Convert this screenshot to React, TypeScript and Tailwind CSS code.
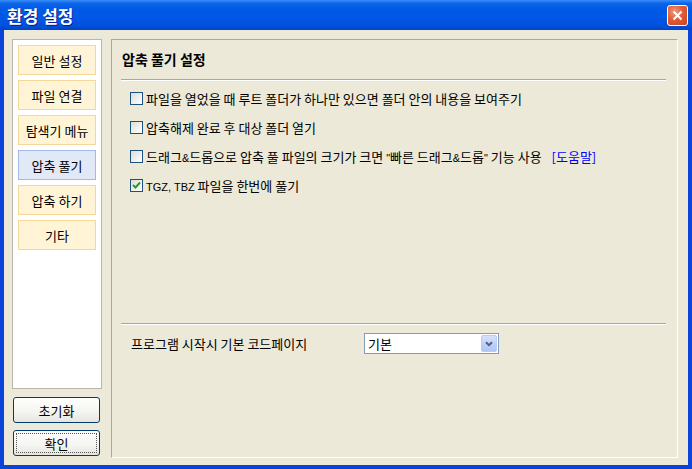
import { useState } from "react";

const menuItems = ["일반 설정", "파일 연결", "탐색기 메뉴", "압축 풀기", "압축 하기", "기타"];

function CheckBox({ checked }: { checked: boolean }) {
  return (
    <span className="w-[13px] h-[13px] shrink-0 border border-[#1C5180] bg-[linear-gradient(135deg,#DCDCD7_0%,#F2F2EE_60%,#FFFFFF_100%)] flex items-center justify-center">
      {checked && (
        <svg width="9" height="9" viewBox="0 0 9 9">
          <path d="M1 4 L3.5 6.5 L8 1.5" fill="none" stroke="#21A121" strokeWidth="2" />
        </svg>
      )}
    </span>
  );
}

function XpButton({ label, focused }: { label: string; focused?: boolean }) {
  return (
    <button className="w-[87px] h-[26px] ml-[1px] rounded-[3px] border border-[#003C74] bg-[linear-gradient(180deg,#FFFFFF_0%,#F4F4F0_60%,#E6E5DE_100%)] p-[2px] text-[13px] leading-none">
      <span
        className={`w-full h-full flex items-center justify-center ${
          focused ? "outline outline-1 outline-dotted outline-[#555] -outline-offset-1" : ""
        }`}
      >
        {label}
      </span>
    </button>
  );
}

export default function App() {
  const [selected, setSelected] = useState(3);
  const [checks, setChecks] = useState([false, false, false, true]);

  const toggle = (i: number) => setChecks(checks.map((c, j) => (j === i ? !c : c)));

  // latin bits are set smaller, like Tahoma 8pt next to Gulim
  const lat = "font-['Liberation_Sans'] text-[11px]";

  const lines = [
    <>파일을 열었을 때 루트 폴더가 하나만 있으면 폴더 안의 내용을 보여주기</>,
    <>압축해제 완료 후 대상 폴더 열기</>,
    <>
      드래그<span className={lat}>&amp;</span>드롭으로 압축 풀 파일의 크기가 크면{" "}
      <span className={lat}>&quot;</span>빠른 드래그
      <span className={lat}>&amp;</span>드롭<span className={lat}>&quot;</span> 기능 사용
    </>,
    <>
      <span className={lat}>TGZ, TBZ</span> 파일을 한번에 풀기
    </>,
  ];

  return (
    <div className="w-[692px] h-[469px] flex flex-col overflow-hidden font-['Noto_Sans_CJK_KR',sans-serif] text-[13px] text-black">
      {/* title bar */}
      <div className="h-[30px] shrink-0 flex items-center justify-between pl-[7px] pr-[4px] bg-[linear-gradient(180deg,#3A8CF8_0%,#0A63E6_12%,#0058E6_35%,#0057E5_65%,#0050DC_85%,#0044C6_100%)]">
        <span className="text-white font-bold text-[17px] leading-none [text-shadow:1px_1px_0_#0A1E8C]">
          환경 설정
        </span>
        <button className="w-[21px] h-[21px] rounded-[3px] border border-white bg-[radial-gradient(circle_at_35%_30%,#F09A7E_0%,#E35C38_45%,#C8401C_100%)] flex items-center justify-center">
          <svg width="11" height="11" viewBox="0 0 11 11">
            <path d="M1.5 1.5 L9.5 9.5 M9.5 1.5 L1.5 9.5" stroke="white" strokeWidth="2" />
          </svg>
        </button>
      </div>

      {/* body */}
      <div className="flex-1 flex bg-[#ECE9D8] border-x-4 border-b-4 border-[#0B44DA] pl-[8px] pt-[9px]">
        {/* left column */}
        <div className="w-[90px] flex flex-col">
          <div className="h-[350px] border border-[#B9B6AA] bg-white p-[5px] flex flex-col gap-[5px]">
            {menuItems.map((item, i) => (
              <div
                key={item}
                onClick={() => setSelected(i)}
                className={`h-[30px] flex items-center justify-center border leading-none ${
                  selected === i
                    ? "bg-[#E1E8F6] border-[#A3BAE6]"
                    : "bg-[#FFF5D6] border-[#F5D79A]"
                }`}
              >
                {item}
              </div>
            ))}
          </div>
          <div className="mt-[8px]">
            <XpButton label="초기화" />
          </div>
          <div className="mt-[7px]">
            <XpButton label="확인" focused />
          </div>
        </div>

        {/* right panel */}
        <div className="ml-[9px] w-[567px] h-[419px] border-l border-t border-[#ACA899] border-r-white border-b-white border-r border-b flex flex-col pl-[9px] pr-[11px]">
          <div className="pt-[9px] pl-[1px] h-[29px] leading-[20px] font-bold text-[14px]">압축 풀기 설정</div>
          <div className="mt-[10px] border-t border-[#ACA899] border-b border-b-white" />

          <div className="mt-[3px] pl-[9px] flex flex-col">
            {lines.map((text, i) => (
              <label key={i} onClick={() => toggle(i)} className="h-[29px] flex items-center cursor-default">
                <CheckBox checked={checks[i]} />
                <span className="ml-[3px] leading-none whitespace-nowrap">{text}</span>
                {i === 2 && <span className="ml-[10px] leading-none text-[#0000FF]">[도움말]</span>}
              </label>
            ))}
          </div>

          <div className="mt-[123px] border-t border-[#ACA899] border-b border-b-white" />

          <div className="mt-[8px] h-[21px] flex items-center pl-[10px]">
            <span className="w-[233px] leading-none">프로그램 시작시 기본 코드페이지</span>
            <div className="w-[135px] h-[21px] border border-[#7F9DB9] bg-white flex items-center justify-between pl-[3px] pr-[1px]">
              <span className="leading-none">기본</span>
              <span className="w-[16px] h-[17px] rounded-[2px] border border-[#B9CBF5] bg-[linear-gradient(180deg,#D6E2FC_0%,#BCCFF8_60%,#AFC5F5_100%)] flex items-center justify-center">
                <svg width="8" height="6" viewBox="0 0 8 6">
                  <path d="M1 1.2 L4 4.2 L7 1.2" fill="none" stroke="#4D6185" strokeWidth="2" />
                </svg>
              </span>
            </div>
          </div>
        </div>
      </div>
    </div>
  );
}
